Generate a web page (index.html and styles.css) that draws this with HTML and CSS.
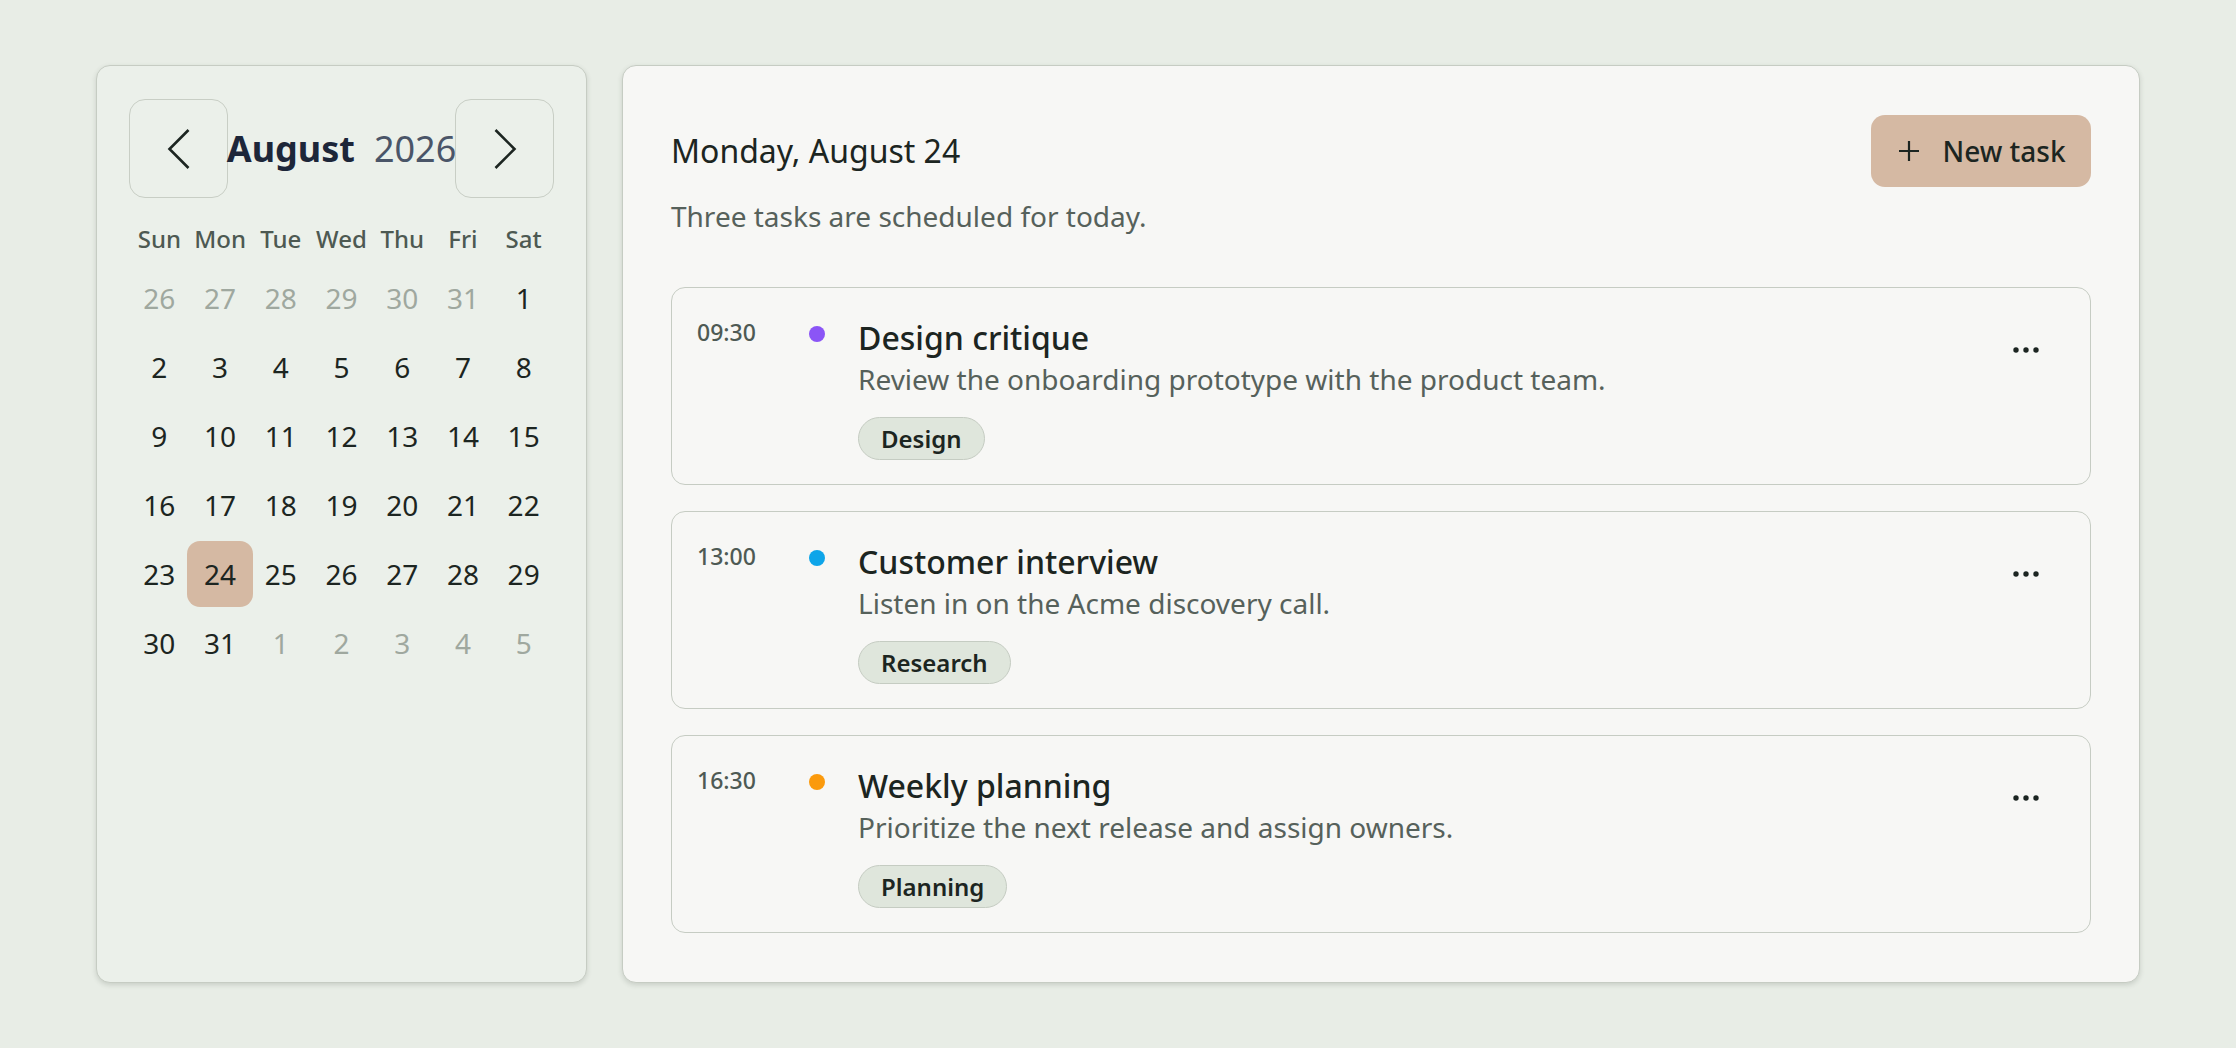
FILE: index.html
```html
<!DOCTYPE html>
<html lang="en">
<head>
<meta charset="utf-8">
<title>Schedule</title>
<link rel="stylesheet" href="styles.css">
</head>
<body>
<div class="app">
  <aside class="calendar">
    <div class="cal-head">
      <button class="nav-btn" aria-label="Previous month">
        <svg width="26" height="44" viewBox="0 0 26 44"><path d="M22.5 3 L3.5 22 L22.5 41" fill="none" stroke="#1c2521" stroke-width="2.6" stroke-linecap="butt" stroke-linejoin="miter"/></svg>
      </button>
      <div class="cal-title"><span class="month">August</span><span class="year">2026</span></div>
      <button class="nav-btn" aria-label="Next month">
        <svg width="26" height="44" viewBox="0 0 26 44"><path d="M3.5 3 L22.5 22 L3.5 41" fill="none" stroke="#1c2521" stroke-width="2.6" stroke-linecap="butt" stroke-linejoin="miter"/></svg>
      </button>
    </div>
    <div class="weekdays">
      <span>Sun</span><span>Mon</span><span>Tue</span><span>Wed</span><span>Thu</span><span>Fri</span><span>Sat</span>
    </div>
    <div class="days">
      <div class="day other"><span>26</span></div>
      <div class="day other"><span>27</span></div>
      <div class="day other"><span>28</span></div>
      <div class="day other"><span>29</span></div>
      <div class="day other"><span>30</span></div>
      <div class="day other"><span>31</span></div>
      <div class="day"><span>1</span></div>
      <div class="day"><span>2</span></div>
      <div class="day"><span>3</span></div>
      <div class="day"><span>4</span></div>
      <div class="day"><span>5</span></div>
      <div class="day"><span>6</span></div>
      <div class="day"><span>7</span></div>
      <div class="day"><span>8</span></div>
      <div class="day"><span>9</span></div>
      <div class="day"><span>10</span></div>
      <div class="day"><span>11</span></div>
      <div class="day"><span>12</span></div>
      <div class="day"><span>13</span></div>
      <div class="day"><span>14</span></div>
      <div class="day"><span>15</span></div>
      <div class="day"><span>16</span></div>
      <div class="day"><span>17</span></div>
      <div class="day"><span>18</span></div>
      <div class="day"><span>19</span></div>
      <div class="day"><span>20</span></div>
      <div class="day"><span>21</span></div>
      <div class="day"><span>22</span></div>
      <div class="day"><span>23</span></div>
      <div class="day selected"><span>24</span></div>
      <div class="day"><span>25</span></div>
      <div class="day"><span>26</span></div>
      <div class="day"><span>27</span></div>
      <div class="day"><span>28</span></div>
      <div class="day"><span>29</span></div>
      <div class="day"><span>30</span></div>
      <div class="day"><span>31</span></div>
      <div class="day other"><span>1</span></div>
      <div class="day other"><span>2</span></div>
      <div class="day other"><span>3</span></div>
      <div class="day other"><span>4</span></div>
      <div class="day other"><span>5</span></div>
    </div>
  </aside>

  <main class="agenda">
    <div class="agenda-head">
      <h1 class="agenda-title">Monday, August 24</h1>
      <button class="new-btn">
        <svg width="22" height="22" viewBox="0 0 22 22"><path d="M11 1 V21 M1 11 H21" fill="none" stroke="#1c2521" stroke-width="2.2"/></svg>
        <span>New task</span>
      </button>
    </div>
    <p class="agenda-sub">Three tasks are scheduled for today.</p>

    <div class="tasks">
      <article class="task">
        <div class="time">09:30</div>
        <span class="dot dot-purple"></span>
        <div class="task-body">
          <h2 class="task-title">Design critique</h2>
          <p class="task-desc">Review the onboarding prototype with the product team.</p>
          <span class="tag">Design</span>
        </div>
        <button class="menu" aria-label="More">
          <svg width="26" height="6" viewBox="0 0 26 6"><circle cx="3" cy="3" r="2.7" fill="#1c2521"/><circle cx="13" cy="3" r="2.7" fill="#1c2521"/><circle cx="23" cy="3" r="2.7" fill="#1c2521"/></svg>
        </button>
      </article>

      <article class="task">
        <div class="time">13:00</div>
        <span class="dot dot-blue"></span>
        <div class="task-body">
          <h2 class="task-title">Customer interview</h2>
          <p class="task-desc">Listen in on the Acme discovery call.</p>
          <span class="tag">Research</span>
        </div>
        <button class="menu" aria-label="More">
          <svg width="26" height="6" viewBox="0 0 26 6"><circle cx="3" cy="3" r="2.7" fill="#1c2521"/><circle cx="13" cy="3" r="2.7" fill="#1c2521"/><circle cx="23" cy="3" r="2.7" fill="#1c2521"/></svg>
        </button>
      </article>

      <article class="task">
        <div class="time">16:30</div>
        <span class="dot dot-orange"></span>
        <div class="task-body">
          <h2 class="task-title">Weekly planning</h2>
          <p class="task-desc">Prioritize the next release and assign owners.</p>
          <span class="tag">Planning</span>
        </div>
        <button class="menu" aria-label="More">
          <svg width="26" height="6" viewBox="0 0 26 6"><circle cx="3" cy="3" r="2.7" fill="#1c2521"/><circle cx="13" cy="3" r="2.7" fill="#1c2521"/><circle cx="23" cy="3" r="2.7" fill="#1c2521"/></svg>
        </button>
      </article>
    </div>
  </main>
</div>
</body>
</html>
```

FILE: styles.css
```css
* { box-sizing: border-box; }

html, body {
  margin: 0;
  height: 100%;
}

body {
  background: #e8ede6;
  font-family: "Noto Sans", "Open Sans", sans-serif;
  color: #1c2521;
}

button {
  font-family: inherit;
  color: inherit;
  cursor: pointer;
}

.app {
  height: 100vh;
  padding: 65px 96px;
  display: grid;
  grid-template-columns: 491px minmax(0, 1fr);
  gap: 35px;
}

/* Calendar */
.calendar {
  background: #ebf0ea;
  border: 1px solid #c6ccc3;
  border-radius: 14px;
  box-shadow: 0 2px 5px rgba(60, 70, 60, 0.18);
  padding: 33px 32px 32px;
}

.cal-head {
  display: grid;
  grid-template-columns: 99px minmax(0, 1fr) 99px;
  align-items: center;
  height: 99px;
}

.nav-btn {
  width: 99px;
  height: 99px;
  border: 1.5px solid #c8cec5;
  border-radius: 16px;
  background: transparent;
  display: flex;
  align-items: center;
  justify-content: center;
  padding: 0;
}

.cal-title {
  display: flex;
  justify-content: center;
  align-items: baseline;
  gap: 19px;
  font-size: 36px;
  line-height: 48px;
  white-space: nowrap;
}

.month {
  flex: none;
  font-weight: 700;
  color: #1d2639;
}

.year {
  flex: none;
  font-weight: 400;
  color: #4a5568;
}

.weekdays {
  margin-top: 25px;
  display: grid;
  grid-template-columns: repeat(7, minmax(0, 1fr));
  font-size: 24px;
  line-height: 32px;
  font-weight: 500;
  color: #4d5952;
  text-align: center;
}

.days {
  margin-top: 10px;
  display: grid;
  grid-template-columns: repeat(7, minmax(0, 1fr));
  row-gap: 3px;
}

.day {
  display: flex;
  justify-content: center;
  height: 66px;
  min-width: 0;
}

.day span {
  flex: none;
  width: 66px;
  height: 66px;
  border-radius: 13px;
  font-size: 28px;
  line-height: 66px;
  text-align: center;
  color: #1c2521;
}

.day.other span {
  color: #9fa89f;
}

.day.selected span {
  background: #d5b9a3;
}

/* Agenda */
.agenda {
  background: #f7f7f5;
  border: 1px solid #c6ccc3;
  border-radius: 14px;
  box-shadow: 0 2px 5px rgba(60, 70, 60, 0.18);
  padding: 49px 48px 48px;
}

.agenda-head {
  display: flex;
  align-items: center;
  justify-content: space-between;
  height: 72px;
}

.agenda-title {
  margin: 0;
  font-size: 32px;
  line-height: 42px;
  font-weight: 400;
  color: #1c2521;
}

.new-btn {
  height: 72px;
  width: 220px;
  border: none;
  border-radius: 14px;
  background: #d5b9a3;
  display: flex;
  align-items: center;
  justify-content: center;
  gap: 22px;
  padding: 0 24px 0 26px;
  font-size: 28px;
  font-weight: 500;
  color: #1c2521;
}

.agenda-sub {
  margin: 9px 0 0;
  font-size: 28px;
  line-height: 40px;
  color: #56615b;
}

.tasks {
  margin-top: 51px;
  display: flex;
  flex-direction: column;
  gap: 26px;
}

.task {
  display: flex;
  align-items: flex-start;
  border: 1px solid #c6ccc3;
  border-radius: 14px;
  padding: 31px 24px 24px 25px;
  background: #f7f7f5;
}

.time {
  width: 112px;
  flex: none;
  font-size: 23px;
  line-height: 26px;
  font-weight: 500;
  color: #4e5a54;
}

.dot {
  flex: none;
  width: 16px;
  height: 16px;
  border-radius: 50%;
  margin-top: 7px;
  margin-right: 33px;
}

.dot-purple { background: #8b55f6; }
.dot-blue { background: #0ea5e9; }
.dot-orange { background: #fb9a0c; }

.task-body {
  flex: 1;
  min-width: 0;
}

.task-title {
  margin: 0;
  font-size: 32px;
  line-height: 38px;
  font-weight: 500;
  color: #1c2521;
}

.task-desc {
  margin: 2px 0 0;
  font-size: 28px;
  line-height: 40px;
  color: #56615b;
}

.tag {
  display: inline-block;
  margin-top: 18px;
  padding: 0 22px;
  height: 43px;
  line-height: 41px;
  border: 1px solid #c5ccc2;
  border-radius: 22px;
  background: #dfe6dc;
  font-size: 24px;
  font-weight: 600;
  color: #1c2521;
}

.menu {
  flex: none;
  width: 48px;
  height: 40px;
  margin: 11px 16px 0 0;
  border: none;
  background: transparent;
  padding: 0;
  display: flex;
  align-items: center;
  justify-content: center;
}
```
